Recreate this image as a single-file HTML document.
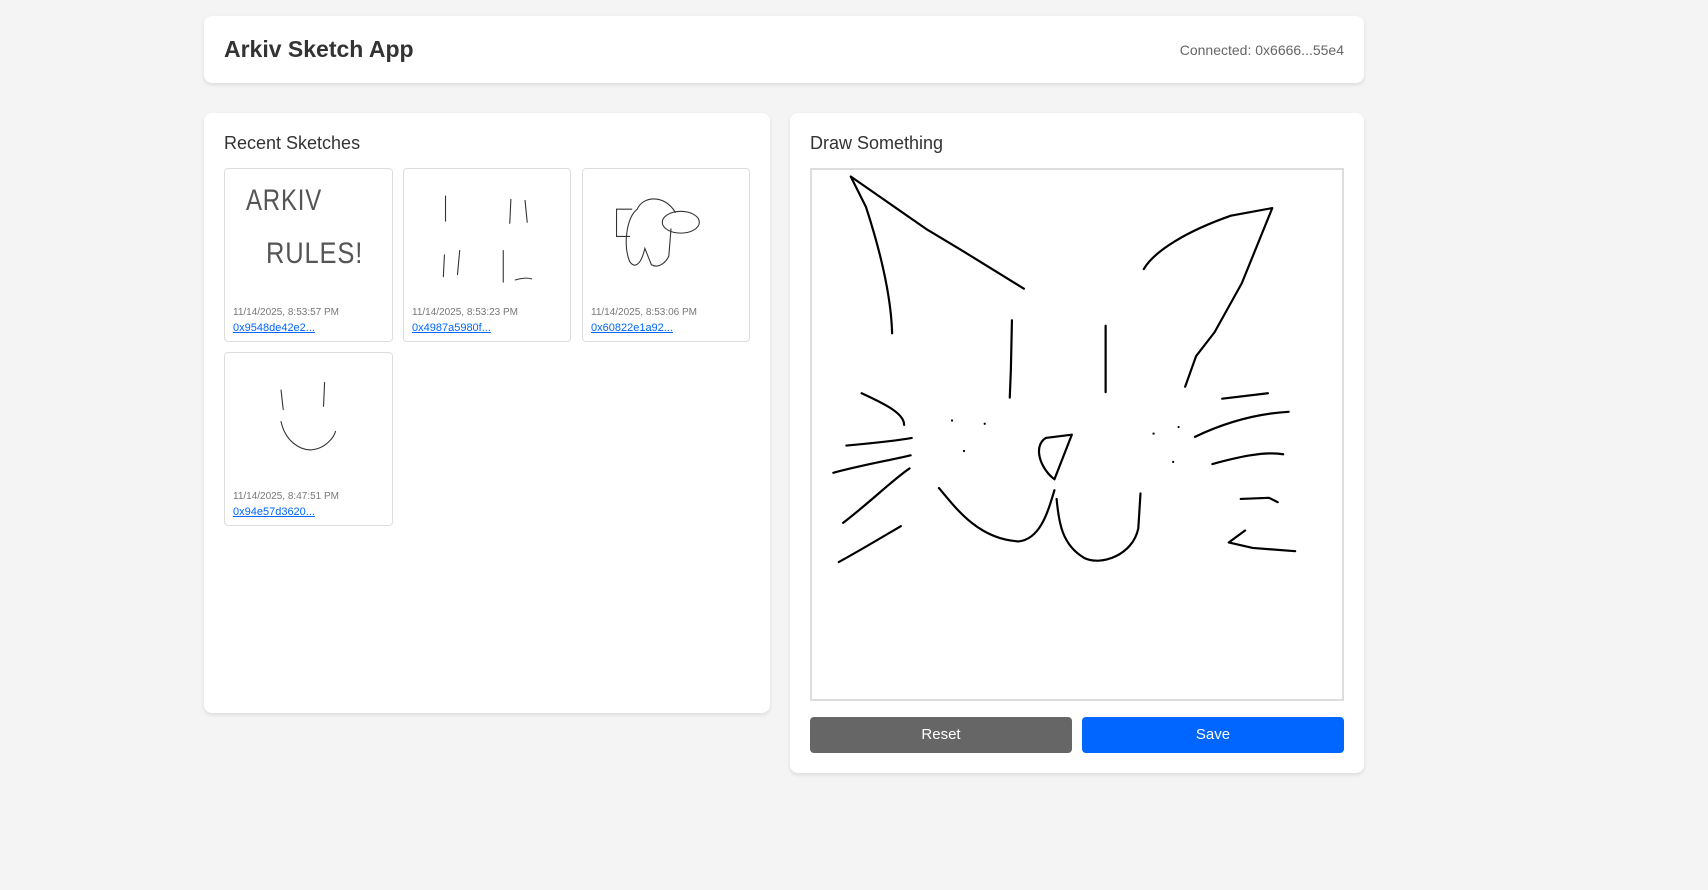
<!DOCTYPE html>
<html><head><meta charset="utf-8"><style>
*{box-sizing:border-box;margin:0;padding:0}
body{width:1708px;height:890px;background:#f4f4f4;font-family:"Liberation Sans",sans-serif;position:relative;overflow:hidden;color:#333}
.card{position:absolute;background:#fff;border-radius:8px;box-shadow:0 2px 4px rgba(0,0,0,0.1)}
.thumb{position:absolute;border:1px solid #ddd;border-radius:4px;background:#fff}
.thumb .d{position:absolute;left:8px;top:138px;font-size:10px;color:#777}
.thumb a{position:absolute;left:8px;top:153px;font-size:11px;color:#0066ff;text-decoration:underline}
.btn{position:absolute;top:717px;height:36px;border-radius:4px;color:#fff;font-size:15px;text-align:center;line-height:36px}
</style></head><body>
<div class="card" style="left:204px;top:16px;width:1160px;height:67px">
<div style="position:absolute;left:20px;top:20px;font-size:23px;font-weight:bold;color:#333">Arkiv Sketch App</div>
<div style="position:absolute;right:20px;top:26px;font-size:14px;color:#666">Connected: 0x6666...55e4</div>
</div>
<div class="card" style="left:204px;top:113px;width:566px;height:600px">
<div style="position:absolute;left:20px;top:20px;font-size:18px;color:#333">Recent Sketches</div>
<div class="thumb" style="left:20px;top:55px;width:169px;height:174px"><div class="d">11/14/2025, 8:53:57 PM</div><a>0x9548de42e2...</a></div>
<div class="thumb" style="left:199px;top:55px;width:168px;height:174px"><div class="d">11/14/2025, 8:53:23 PM</div><a>0x4987a5980f...</a></div>
<div class="thumb" style="left:378px;top:55px;width:168px;height:174px"><div class="d">11/14/2025, 8:53:06 PM</div><a>0x60822e1a92...</a></div>
<div class="thumb" style="left:20px;top:239px;width:169px;height:174px"><div class="d">11/14/2025, 8:47:51 PM</div><a>0x94e57d3620...</a></div>
</div>
<div class="card" style="left:790px;top:113px;width:574px;height:660px">
<div style="position:absolute;left:20px;top:20px;font-size:18px;color:#333">Draw Something</div>
<div style="position:absolute;left:20px;top:55px;width:534px;height:533px;border:2px solid #ddd"></div>
</div>
<div class="btn" style="left:810px;width:262px;background:#666">Reset</div>
<div class="btn" style="left:1082px;width:262px;background:#0066ff">Save</div>
<div style="position:absolute;left:246px;top:184px;font-size:30px;color:#555;letter-spacing:1px;transform:scaleX(0.8);transform-origin:left">ARKIV</div>
<div style="position:absolute;left:266px;top:237px;font-size:30px;color:#555;letter-spacing:1px;transform:scaleX(0.85);transform-origin:left">RULES!</div>
<svg style="position:absolute;left:0;top:0" width="1708" height="890" viewBox="0 0 1568 817">
<g fill="none" stroke="#333" stroke-width="1" stroke-linecap="round">
<path d="M409,180 L409,203 M469,183 L468,205 M482,184 L484,204 M408,234 L407,254 M422,230 L420,252 M462,230 L462,259 M473,257 C480,255 485,255 488,256"/>
<path d="M580,192 L566,192 L566,217 L578,217 M585,192 C575,200 572,225 578,240 C582,246 588,245 592,228 L598,243 C605,247 612,240 614,235 L616,210 M585,192 C590,180 610,178 620,195"/>
<ellipse cx="625" cy="204" rx="17" ry="10"/>
<path d="M258,358 L260,376 M298,351 L297,373 M258,387 C262,405 275,413 285,413 C300,412 307,400 308,396"/>
</g>
<g fill="none" stroke="#000" stroke-width="2" stroke-linecap="round" stroke-linejoin="round">
<path d="M819,306 C818,270 808,230 795,190 L781,162 L850,210 L880,228 L940,265"/>
<path d="M1050,247 C1060,230 1090,212 1130,198 L1168,191 L1140,260 L1115,305 L1098,327 L1088,355"/>
<path d="M929,294 L928,340 L927,365 M1015,299 L1015,360"/>
<path d="M791,361 C815,372 830,380 830,390 M777,409 C800,407 820,405 837,402 M765,434 C795,426 820,422 836,418 M774,480 C800,460 820,440 835,430 M770,516 C790,505 810,493 827,483"/>
<path d="M1122,366 L1164,361 M1097,401 C1120,390 1150,380 1183,378 M1113,426 C1135,420 1160,414 1178,417 M1139,458 L1165,457 L1173,461 M1143,487 L1128,498 L1150,503 L1189,506"/>
<path d="M968,440 C955,430 948,410 960,402 L984,399 L968,440"/>
<path d="M862,448 C880,470 900,495 935,497 C955,495 962,470 968,450 M970,458 C972,480 975,500 995,512 C1010,520 1040,510 1045,485 L1047,453"/>
</g>
<g fill="#000"><circle cx="874" cy="386" r="1"/><circle cx="904" cy="389" r="1"/><circle cx="885" cy="414" r="1"/><circle cx="1059" cy="398" r="1"/><circle cx="1082" cy="392" r="1"/><circle cx="1077" cy="424" r="1"/></g>
</svg>
</body></html>
